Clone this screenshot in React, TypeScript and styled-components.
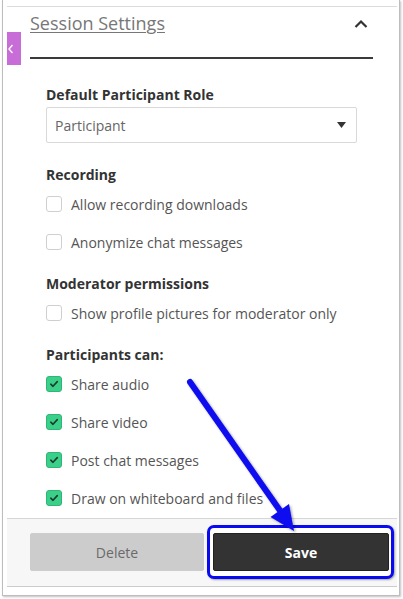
import React, { useState } from 'react';
import styled, { createGlobalStyle } from 'styled-components';

const GlobalStyle = createGlobalStyle`
  html, body {
    margin: 0;
    padding: 0;
    background: #ffffff;
  }
  * {
    box-sizing: border-box;
  }
`;

const Page = styled.div`
  position: relative;
  width: 403px;
  height: 599px;
  overflow: hidden;
  background: #ffffff;
  font-family: 'Open Sans', 'Liberation Sans', sans-serif;
`;

const Window = styled.div`
  margin-left: 2px;
  width: 398px;
  height: 596px;
  border: 1px solid #bdbdbd;
  border-top: none;
  box-shadow: 1px 1px 2px rgba(0, 0, 0, 0.25);
  padding: 6px 2px 8px 4px;
  display: flex;
`;

const Panel = styled.div`
  position: relative;
  flex: 1;
  display: flex;
  flex-direction: column;
  border-top: 1px solid #dcdcdc;
`;

const SideTab = styled.div`
  position: absolute;
  left: 0;
  top: 25px;
  width: 14px;
  height: 33px;
  background: #c86cd8;
  display: flex;
  align-items: center;
  justify-content: flex-start;
  padding-left: 1px;
`;

const Header = styled.div`
  height: 50px;
  padding: 3px 29px 0 23px;
  display: flex;
  justify-content: space-between;
  align-items: flex-start;
`;

const Title = styled.h2`
  margin: 0;
  font-size: 18px;
  line-height: 26px;
  font-weight: 400;
  color: #777777;
  text-decoration: underline;
  text-underline-offset: 2px;
  text-decoration-thickness: 1px;
`;

const Collapse = styled.button`
  border: none;
  background: none;
  padding: 0;
  margin-top: 9px;
  width: 14px;
  height: 10px;
  display: flex;
  cursor: pointer;
`;

const Divider = styled.div`
  height: 2px;
  margin: 0 24px 0 23px;
  background: #3a3a3a;
`;

const Body = styled.div`
  flex: 1;
  padding: 26px 40px 0 39px;
`;

const Section = styled.section<{ $first?: boolean }>`
  margin-top: ${(p) => (p.$first ? '0' : '22px')};
`;

const SectionLabel = styled.div<{ $tight?: boolean }>`
  font-size: 14px;
  line-height: 20px;
  font-weight: 700;
  color: #333333;
  margin-bottom: ${(p) => (p.$tight ? '2px' : '9px')};
`;

const Select = styled.div`
  height: 36px;
  border: 1px solid #d9d9d9;
  border-radius: 2px;
  display: flex;
  align-items: center;
  justify-content: space-between;
  padding: 0 10px 0 8px;
  font-size: 14px;
  color: #666666;
  background: #ffffff;
`;

const Rows = styled.div`
  display: flex;
  flex-direction: column;
  gap: 18px;
`;

const Row = styled.label`
  display: flex;
  align-items: center;
  gap: 9px;
  height: 20px;
  font-size: 14px;
  color: #555555;
  cursor: pointer;
`;

const Box = styled.span<{ $checked: boolean }>`
  width: 16px;
  height: 16px;
  border-radius: 3px;
  border: 1px solid ${(p) => (p.$checked ? '#2fb574' : '#cfcfcf')};
  background: ${(p) => (p.$checked ? '#3bd08a' : '#ffffff')};
  display: flex;
  align-items: center;
  justify-content: center;
  flex-shrink: 0;
`;

const Footer = styled.div`
  border-top: 1px solid #d6d6d6;
  border-bottom: 1px solid #cccccc;
  background: #f7f7f7;
  padding: 14px 7px 15px 23px;
  display: flex;
  gap: 9px;
`;

const Button = styled.button<{ $primary?: boolean }>`
  position: relative;
  z-index: 1;
  width: 100%;
  height: 38px;
  border-radius: 2px;
  border: 1px solid ${(p) => (p.$primary ? '#222222' : '#cccccc')};
  background: ${(p) => (p.$primary ? '#333333' : '#cccccc')};
  color: ${(p) => (p.$primary ? '#ffffff' : '#6a6a6a')};
  font-family: inherit;
  font-size: 14px;
  font-weight: ${(p) => (p.$primary ? 700 : 400)};
  cursor: pointer;
`;

const ButtonSlot = styled.div<{ $wide?: boolean }>`
  position: relative;
  width: ${(p) => (p.$wide ? '176px' : '174px')};
`;

const Highlight = styled.div`
  position: absolute;
  top: -8px;
  bottom: -8px;
  left: -6px;
  right: -5px;
  border: 3px solid #0a0af0;
  border-radius: 7px;
  background: #ffffff;
  box-shadow: 1px 1px 2px rgba(0, 0, 0, 0.35);
`;

const ArrowLayer = styled.svg`
  position: absolute;
  left: 0;
  top: 0;
  pointer-events: none;
`;

const Check = () => (
  <svg width="10" height="10" viewBox="0 0 10 10">
    <path d="M1.8 5.2 L4 7.3 L8.3 2.6" fill="none" stroke="#1f3a2c" strokeWidth="1.6" strokeLinecap="round" strokeLinejoin="round" />
  </svg>
);

interface Option {
  label: string;
  checked: boolean;
}

const initial: Record<string, Option[]> = {
  recording: [
    { label: 'Allow recording downloads', checked: false },
    { label: 'Anonymize chat messages', checked: false },
  ],
  moderator: [{ label: 'Show profile pictures for moderator only', checked: false }],
  participants: [
    { label: 'Share audio', checked: true },
    { label: 'Share video', checked: true },
    { label: 'Post chat messages', checked: true },
    { label: 'Draw on whiteboard and files', checked: true },
  ],
};

const App: React.FC = () => {
  const [options, setOptions] = useState(initial);

  // toggle a checkbox inside a group
  const toggle = (group: string, idx: number): void => {
    setOptions({
      ...options,
      [group]: options[group].map((o, i) => (i === idx ? { ...o, checked: !o.checked } : o)),
    });
  };

  const renderRows = (group: string) => (
    <Rows>
      {options[group].map((o, i) => (
        <Row key={o.label} onClick={() => toggle(group, i)}>
          <Box $checked={o.checked}>{o.checked && <Check />}</Box>
          {o.label}
        </Row>
      ))}
    </Rows>
  );

  return (
    <Page>
      <GlobalStyle />
      <Window>
        <Panel>
          <SideTab>
            <svg width="6" height="10" viewBox="0 0 6 10">
              <path d="M4.5 1 L1 5 L4.5 9" fill="none" stroke="#ffffff" strokeWidth="1.4" />
            </svg>
          </SideTab>
          <Header>
            <Title>Session Settings</Title>
            <Collapse aria-label="Collapse">
              <svg width="14" height="10" viewBox="0 0 14 10">
                <path d="M1.5 8 L7 2.5 L12.5 8" fill="none" stroke="#333333" strokeWidth="2.2" />
              </svg>
            </Collapse>
          </Header>
          <Divider />
          <Body>
            <Section $first>
              <SectionLabel $tight>Default Participant Role</SectionLabel>
              <Select>
                Participant
                <svg width="9" height="6" viewBox="0 0 9 6">
                  <path d="M0 0 H9 L4.5 6 Z" fill="#333333" />
                </svg>
              </Select>
            </Section>
            <Section>
              <SectionLabel>Recording</SectionLabel>
              {renderRows('recording')}
            </Section>
            <Section>
              <SectionLabel>Moderator permissions</SectionLabel>
              {renderRows('moderator')}
            </Section>
            <Section>
              <SectionLabel>Participants can:</SectionLabel>
              {renderRows('participants')}
            </Section>
          </Body>
          <Footer>
            <ButtonSlot>
              <Button>Delete</Button>
            </ButtonSlot>
            <ButtonSlot $wide>
              <Highlight />
              <Button $primary>Save</Button>
            </ButtonSlot>
          </Footer>
        </Panel>
      </Window>
      <ArrowLayer width="403" height="599" viewBox="0 0 403 599">
        <defs>
          <filter id="arrowShadow" x="-20%" y="-20%" width="140%" height="140%">
            <feDropShadow dx="1.5" dy="1.5" stdDeviation="1.2" floodColor="#000000" floodOpacity="0.35" />
          </filter>
        </defs>
        <g filter="url(#arrowShadow)">
          <line x1="190" y1="382" x2="281" y2="512" stroke="#0a0af0" strokeWidth="6" strokeLinecap="round" />
          <polygon points="294,531 270.5,517 289,504" fill="#0a0af0" />
        </g>
      </ArrowLayer>
    </Page>
  );
};

export default App;
